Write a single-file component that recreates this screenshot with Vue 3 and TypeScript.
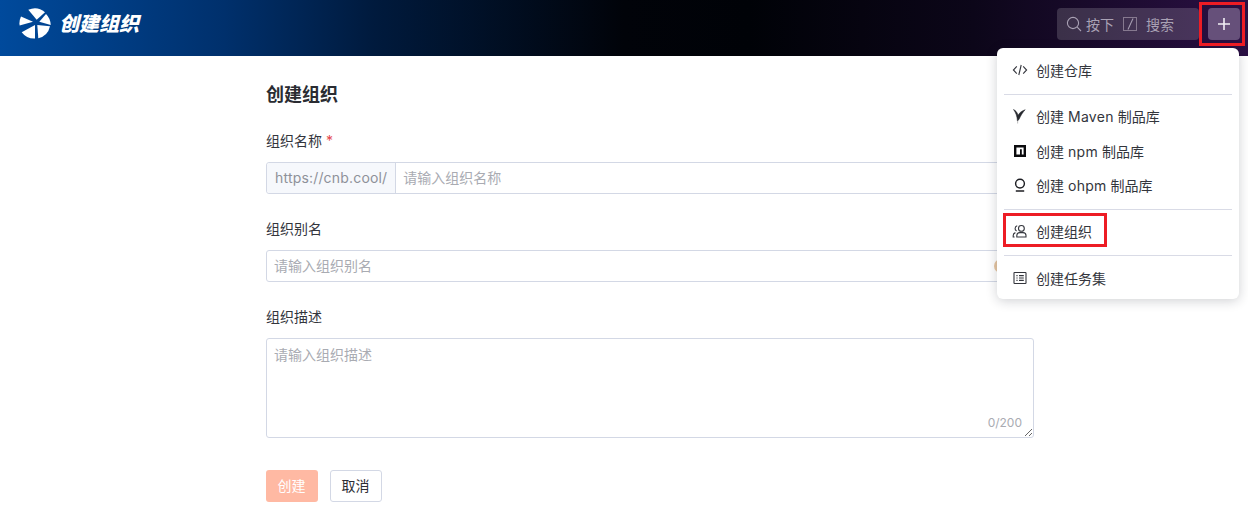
<script setup lang="ts">
interface MenuRow { head: string; latin?: string; tail?: string; icon: string; boxed?: boolean }
const groups: MenuRow[][] = [
  [{ head: '创建仓库', icon: 'code' }],
  [
    { head: '创建 ', latin: 'Maven', tail: ' 制品库', icon: 'maven' },
    { head: '创建 ', latin: 'npm', tail: ' 制品库', icon: 'npm' },
    { head: '创建 ', latin: 'ohpm', tail: ' 制品库', icon: 'ohpm' },
  ],
  [{ head: '创建组织', icon: 'org', boxed: true }],
  [{ head: '创建任务集', icon: 'list' }],
]
</script>

<template>
  <div class="page">
    <header class="top">
      <div class="brand">
        <svg class="logo" width="32" height="32" viewBox="0 0 32 32">
          <g fill="#fff">
            <path d="M9.3 1.7A15.8 15.8 0 0 1 26 4.3L17.7 11.7Z" />
            <path d="M27 6A15.8 15.8 0 0 1 31.7 17L20.3 13.7Z" />
            <path d="M31 18.3A15.8 15.8 0 0 1 19.3 30.3L18.3 17Z" />
            <path d="M16 30.6A15.8 15.8 0 0 1 2.7 24.3L16 17Z" />
            <path d="M.6 17.4A15.8 15.8 0 0 1 2 8.5L14 13.7Z" />
          </g>
        </svg>
        <span class="brand-text">创建组织</span>
      </div>
      <div class="actions">
        <div class="search">
          <svg width="16" height="16" viewBox="0 0 16 16" fill="none" stroke="#a9a1b4" stroke-width="1.1">
            <circle cx="7" cy="7" r="5.6" />
            <path d="M11.2 11.2 15 15" />
          </svg>
          <span>按下</span>
          <span class="slash"><i></i></span>
          <span>搜索</span>
        </div>
        <button class="plus" type="button" aria-label="创建">
          <svg width="12" height="12" viewBox="0 0 12 12"><path d="M6 0v12M0 6h12" stroke="#f2eff5" stroke-width="1.6" /></svg>
        </button>
      </div>
    </header>

    <main class="form">
      <h1>创建组织</h1>
      <div class="field">
        <label>组织名称 <em>*</em></label>
        <div class="group">
          <span class="prefix">https://cnb.cool/</span>
          <input type="text" placeholder="请输入组织名称" />
        </div>
      </div>
      <div class="field">
        <label>组织别名</label>
        <div class="group">
          <input type="text" placeholder="请输入组织别名" />
          <span class="dot"></span>
        </div>
      </div>
      <div class="field">
        <label>组织描述</label>
        <div class="area">
          <textarea placeholder="请输入组织描述"></textarea>
          <span class="count">0/200</span>
        </div>
      </div>
      <div class="buttons">
        <button class="primary" type="button">创建</button>
        <button class="cancel" type="button">取消</button>
      </div>
    </main>

    <div class="menu">
      <template v-for="(group, g) in groups" :key="g">
        <div v-if="g > 0" class="divider"></div>
        <div v-for="row in group" :key="row.icon" class="row">
          <svg class="ico" width="16" height="16" viewBox="0 0 16 16" fill="none" stroke="#33353c" stroke-width="1.1">
            <template v-if="row.icon === 'code'">
              <path d="M4.8 4.4 1.4 8l3.4 3.6M11.2 4.4 14.6 8l-3.4 3.6M9.2 3 6.8 13" />
            </template>
            <template v-else-if="row.icon === 'maven'">
              <path d="M1.5 1.5C3.6 2.4 5.3 4.5 6.1 7.2 7.4 4.8 9.6 3 13.2 1.7 11 4 8.6 7.6 7 11.5L5.4 13C5.2 8.6 3.8 4.6 1.5 1.5Z" fill="#26282e" stroke="#26282e" stroke-width=".5" />
              <path d="M5.6 13 5.6 15.5" stroke="#c4c4c4" />
            </template>
            <template v-else-if="row.icon === 'npm'">
              <path d="M2 2h12v12H2Z" fill="#0b0b0d" stroke="none" />
              <path d="M4.4 11.6V4.4h7.2v7.2H9.8V6.2H8v5.4Z" fill="#fff" stroke="none" />
            </template>
            <template v-else-if="row.icon === 'ohpm'">
              <circle cx="8" cy="6.6" r="4.4" stroke="#1c1d22" stroke-width="1.4" />
              <path d="M3.8 14h8.4" stroke="#1c1d22" stroke-width="1.5" />
            </template>
            <template v-else-if="row.icon === 'org'">
              <circle cx="9.4" cy="5.4" r="2.9" />
              <path d="M4.8 14v-1.4c0-1.7 1.3-3 3-3h3.2c1.7 0 3 1.3 3 3V14Z" />
              <path d="M5.2 2.8A2.8 2.8 0 0 0 4.6 8M3.4 9.6C2 10 1.2 11.2 1.2 12.6V14h1.4" />
            </template>
            <template v-else>
              <rect x="2" y="2.5" width="12" height="11" rx=".6" />
              <path d="M4.4 5.6h1.2M7 5.6h4.8M4.4 8h1.2M7 8h4.8M4.4 10.4h1.2M7 10.4h4.8" />
            </template>
          </svg>
          <span>{{ row.head }}<span v-if="row.latin" class="latin">{{ row.latin }}</span>{{ row.tail }}</span>
          <span v-if="row.boxed" class="mark mark-row"></span>
        </div>
      </template>
    </div>

    <span class="mark mark-plus"></span>
  </div>
</template>

<style>
html, body { margin: 0; background: #fff; }
</style>

<style scoped>
.page {
  position: relative;
  width: 1248px;
  height: 522px;
  overflow: hidden;
  font-family: Inter, "Noto Sans CJK SC", sans-serif;
  font-size: 14px;
  color: #2c2e34;
}
.top {
  height: 56px;
  box-sizing: border-box;
  padding: 0 8px 8px 19px;
  display: flex;
  align-items: center;
  justify-content: space-between;
  background: linear-gradient(90deg, #004a9c 0%, #00306c 18%, #001a3d 30%, #010309 50%, #000207 60%, #0c0619 78%, #2b1044 100%);
}
.brand { display: flex; align-items: center; gap: 8px; }
.logo { display: block; }
.brand-text {
  color: #fff;
  font-size: 20px;
  font-weight: 900;
  font-style: italic;
  line-height: 28px;
}
.actions { display: flex; align-items: center; gap: 9px; }
.search {
  width: 142px;
  height: 32px;
  box-sizing: border-box;
  padding-left: 9px;
  display: flex;
  align-items: center;
  gap: 4px;
  border-radius: 4px;
  background: rgba(255, 255, 255, .16);
  color: #a9a1b4;
}
.slash {
  width: 12px;
  height: 12px;
  margin: 0 5px;
  border: 1px solid #86798f;
  position: relative;
  flex: none;
}
.slash i {
  position: absolute;
  left: 5.5px;
  top: 0;
  width: 1px;
  height: 12px;
  background: #a9a1b4;
  transform: rotate(25deg);
}
.plus {
  width: 32px;
  height: 32px;
  padding: 0;
  border: 0;
  border-radius: 4px;
  background: #66507a;
  display: flex;
  align-items: center;
  justify-content: center;
}
.form {
  width: 768px;
  margin-left: 266px;
  padding-top: 25px;
}
h1 {
  margin: 0 0 21px;
  font-size: 18px;
  line-height: 28px;
  font-weight: 700;
  color: #2a2c32;
}
.field { margin-bottom: 24px; }
label {
  display: block;
  line-height: 22px;
  margin-bottom: 10px;
  color: #33353c;
}
em { color: #e5484d; font-style: normal; }
.group {
  position: relative;
  height: 32px;
  box-sizing: border-box;
  display: flex;
  border: 1px solid #d3d8e5;
  border-radius: 3px;
}
.prefix {
  padding: 0 8px;
  line-height: 30px;
  letter-spacing: .18px;
  color: #8e9199;
  background: #f6f8fc;
  border-right: 1px solid #d3d8e5;
  border-radius: 3px 0 0 3px;
  white-space: nowrap;
}
input, textarea {
  flex: 1;
  min-width: 0;
  border: 0;
  outline: 0;
  padding: 0 8px 2px 7px;
  background: transparent;
  font: inherit;
  color: inherit;
}
input::placeholder, textarea::placeholder { color: #a9abb2; opacity: 1; }
.dot {
  position: absolute;
  right: 25px;
  top: 8px;
  width: 14px;
  height: 14px;
  border-radius: 50%;
  background: #e7c6a2;
}
.area { position: relative; height: 100px; }
textarea {
  display: block;
  width: 100%;
  height: 100px;
  box-sizing: border-box;
  padding: 5px 8px 5px 7px;
  border: 1px solid #d3d8e5;
  border-radius: 3px;
  resize: vertical;
}
.count {
  position: absolute;
  right: 12px;
  bottom: 7px;
  font-size: 12px;
  line-height: 16px;
  color: #a9abb2;
}
.buttons { display: flex; gap: 12px; padding-top: 8px; }
.buttons button {
  width: 52px;
  height: 32px;
  padding: 0 1px 2px 0;
  border-radius: 3px;
  font: inherit;
}
.primary { border: 0; background: #ffb9a3; color: #fff; }
.cancel { border: 1px solid #d3d8e5; background: #fff; color: #2c2e34; }
.menu {
  position: absolute;
  left: 997px;
  top: 48px;
  width: 242px;
  height: 251px;
  box-sizing: border-box;
  padding: 6px 7px;
  background: #fff;
  border-radius: 6px;
  box-shadow: 0 2px 12px rgba(20, 24, 40, .2);
}
.row {
  position: relative;
  height: 34.4px;
  box-sizing: border-box;
  padding: 0 0 2px 8px;
  display: flex;
  align-items: center;
  gap: 8px;
  color: #33353c;
}
.row:last-child { padding-bottom: 0; }
.latin { letter-spacing: .3px; }
.ico { flex: none; }
.divider {
  height: 1px;
  margin: 6px 0 4.6px;
  background: #d9dbe6;
}
.mark {
  position: absolute;
  box-sizing: border-box;
  border: 3px solid #ed1c24;
  pointer-events: none;
}
.mark-row { left: -1px; top: -2px; width: 104px; height: 34px; }
.mark-plus { left: 1199px; top: 2px; width: 46px; height: 44px; }
</style>
